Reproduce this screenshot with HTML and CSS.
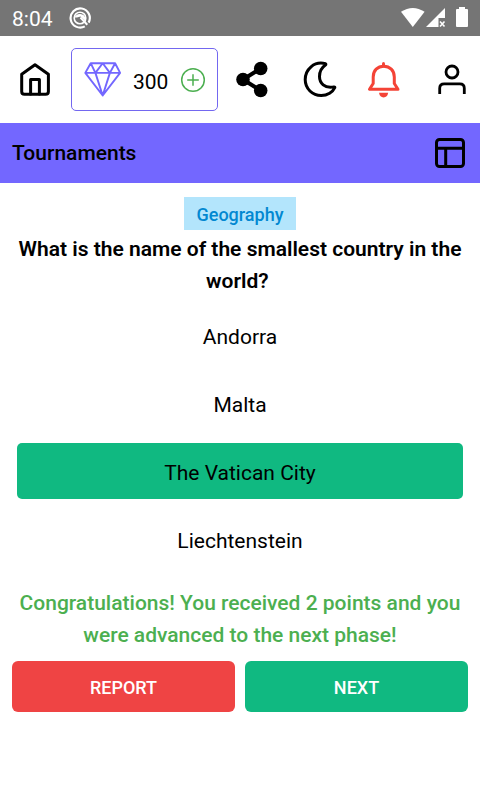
FILE: index.html
```
<!DOCTYPE html>
<html lang="en">
<head>
    <meta charset="UTF-8">
    <meta name="viewport" content="width=device-width, initial-scale=1.0">
    <title>Tournaments</title>
    <link rel="stylesheet" href="styles.css">
</head>
<body>

    <!-- Status bar -->
    <div class="status-bar">
        <span class="time">8:04</span>
        <svg class="app-mark" width="24" height="24" viewBox="0 0 24 24">
            <path d="M16.8 20.4A9.6 9.6 0 1 1 20.6 16.6" fill="none" stroke="#fff" stroke-width="2.2"/>
            <circle cx="12" cy="12" r="5.8" fill="none" stroke="#fff" stroke-width="1.6"/>
            <path d="M6.5 11.5A5.8 5.8 0 0 1 17.5 12.5V15L12.5 10.5 9 11.5Z" fill="#fff"/>
            <path d="M12.5 11.5L19.3 18.8" stroke="#fff" stroke-width="2"/>
        </svg>
        <svg class="status-icons" width="70" height="24" viewBox="0 0 70 24" fill="#fff">
            <path d="M1 5.8Q12.8-1.8 24.6 5.8L12.8 21Z"/>
            <path d="M45 2V12H38.5V21H26Z"/>
            <path d="M40 15.5L44.5 20.5M44.5 15.5L40 20.5" stroke="#fff" stroke-width="1.6"/>
            <path d="M59 3V1H65V3H67Q68 3 68 4V20Q68 21 67 21H57Q56 21 56 20V4Q56 3 57 3Z"/>
        </svg>
    </div>

    <!-- Top menu -->
    <div class="top-menu">
        <svg class="icon home" viewBox="0 0 40 41">
            <path d="M20 5.7L33.4 15.2V32.5Q33.4 35.3 30.6 35.3H9.5Q6.7 35.3 6.7 32.5V15.2Z"/>
            <path d="M15.6 35V20.4H24.4V35"/>
        </svg>
        <div class="points">
            <svg class="gem" width="38" height="38" viewBox="0 0 38 38">
                <path d="M6.7 2.2H31.1L36.1 11.9 18.7 34.5 1.3 11.9ZM1.3 11.9H36.1M6.7 2.2L11.4 11.9 18.7 2.2 25.9 11.9 31.1 2.2M11.4 11.9L18.7 34.5 25.9 11.9"/>
            </svg>
            <span class="count">300</span>
            <svg class="plus" width="26" height="26" viewBox="0 0 26 26">
                <circle cx="13" cy="13" r="11.3"/>
                <path d="M13 7.2V18.8M7.2 13H18.8"/>
            </svg>
        </div>
        <svg class="icon share" viewBox="0 0 40 41">
            <path d="M28.7 9.5L11 20.5L28.7 31.5"/>
            <circle cx="11" cy="20.5" r="6.8"/>
            <circle cx="28.7" cy="9.5" r="6.8"/>
            <circle cx="28.7" cy="31.5" r="6.8"/>
        </svg>
        <svg class="icon moon" viewBox="0 0 40 41">
            <path d="M25.5 4.7C14 1.8 5.2 10.5 5.2 20.6C5.2 29.8 12.5 36.6 21.2 36.6C27.5 36.6 32.8 33 34.8 28.7C35 28.2 34.6 27.8 34 27.9C24.5 29.8 19.5 24 19.5 17.5C19.5 12.5 21.8 8.5 25.4 6C26 5.6 26 5 25.5 4.7Z"/>
        </svg>
        <svg class="icon bell" viewBox="0 0 40 41">
            <path d="M19.5 4.5V7"/>
            <path d="M5.5 30.3H34L30.3 24.5V18C30.3 11.5 25.8 7.2 19.7 7.2S9.2 11.5 9.2 18V24.5Z"/>
            <path class="clapper" d="M15 33.8H24.2Q23.4 38.4 19.6 38.4T15 33.8Z"/>
        </svg>
        <svg class="icon user" viewBox="0 0 40 41">
            <circle cx="20" cy="13" r="6"/>
            <path d="M7.7 35V29.2Q7.7 24.8 12.2 24.8H27.8Q32.3 24.8 32.3 29.2V35"/>
        </svg>
    </div>

    <!-- Page title -->
    <div class="title-bar">
        <h1>Tournaments</h1>
        <svg class="layout" width="32" height="32" viewBox="0 0 32 32">
            <rect x="2.5" y="2.5" width="27" height="27" rx="3"/>
            <path d="M2.5 11.2H29.5M11.7 11.2V29.5"/>
        </svg>
    </div>

    <!-- Question -->
    <div class="quiz">
        <span class="category">Geography</span>
        <h2>What is the name of the smallest country in the world?&nbsp;</h2>
        <div class="answers">
            <button class="answer">Andorra</button>
            <button class="answer">Malta</button>
            <button class="answer correct">The Vatican City</button>
            <button class="answer">Liechtenstein</button>
        </div>
        <p class="result">Congratulations! You received 2 points and you were advanced to the next phase!</p>
        <div class="actions">
            <button class="report">REPORT</button>
            <button class="next">NEXT</button>
        </div>
    </div>

</body>
</html>
```
FILE: styles.css
```
* {
    box-sizing: border-box;
}

body {
    margin: 0;
    background-color: #fff;
    color: #000;
    font-family: Roboto, sans-serif;
    font-size: 21px;
}

svg {
    display: block;
    flex-shrink: 0;
}

button {
    border: 0;
    padding: 0;
    font-family: inherit;
    color: inherit;
}

.status-bar {
    display: flex;
    align-items: center;
    height: 36px;
    padding: 0 10px 0 12px;
    background-color: #757575;
    color: #fff;
}

.time {
    width: 56px;
    padding-top: 2px;
}

.status-icons {
    margin-left: auto;
}

.top-menu {
    display: flex;
    align-items: center;
    height: 87px;
    padding-left: 15px;
}

.icon {
    width: 40px;
    height: 41px;
    fill: none;
    stroke: #000;
    stroke-width: 3;
    stroke-linecap: round;
    stroke-linejoin: round;
}

.points {
    display: flex;
    align-items: center;
    width: 147px;
    height: 63px;
    margin: 0 14px 0 16px;
    padding-left: 12px;
    border: 1px solid #7367f0;
    border-radius: 5px;
}

.gem {
    fill: none;
    stroke: #7367ff;
    stroke-width: 1.9;
    stroke-linejoin: round;
}

.count {
    flex-shrink: 0;
    width: 58px;
    padding: 4px 0 0 11px;
}

.plus {
    fill: none;
    stroke: #4caf50;
    stroke-width: 1.5;
}

.share {
    stroke-width: 4;
}

.share circle {
    fill: #000;
    stroke: none;
}

.moon {
    margin-left: 28px;
}

.bell {
    margin-left: 24px;
    stroke: #f44336;
}

.bell .clapper {
    fill: #f44336;
    stroke: none;
}

.user {
    margin-left: 28px;
    stroke-width: 2.8;
}

.user path {
    stroke-linecap: butt;
}

.title-bar {
    display: flex;
    align-items: center;
    justify-content: space-between;
    height: 60px;
    padding: 0 14px 0 12px;
    background-color: #7367ff;
}

h1 {
    margin: 0;
    font-size: 21px;
    font-weight: 500;
}

.layout {
    fill: none;
    stroke: #000;
    stroke-width: 3;
}

.quiz {
    display: flex;
    flex-direction: column;
    align-items: center;
    padding: 14px 12px 0;
    text-align: center;
}

.category {
    height: 33px;
    padding: 1px 12px 0;
    background-color: #b3e5fc;
    color: #0288d1;
    font-size: 18px;
    font-weight: 500;
    line-height: 33px;
}

h2 {
    margin: 3px 0 10px;
    font-size: 21px;
    font-weight: 600;
    line-height: 32px;
}

.answers {
    display: flex;
    flex-direction: column;
    gap: 12px;
    width: 446px;
}

.answer {
    height: 56px;
    padding-top: 3px;
    border-radius: 5px;
    background-color: transparent;
    font-size: 21px;
}

.correct {
    background-color: #10b981;
}

.result {
    margin: 20px 0 10px;
    color: #4caf50;
    font-weight: 500;
    line-height: 32px;
}

.actions {
    display: flex;
    gap: 10px;
    width: 100%;
}

.actions button {
    flex: 1;
    height: 51px;
    padding-top: 1px;
    border-radius: 6px;
    color: #fff;
    font-size: 18px;
    font-weight: 500;
}

.actions .report {
    background-color: #ef4444;
}

.actions .next {
    background-color: #10b981;
}
```
